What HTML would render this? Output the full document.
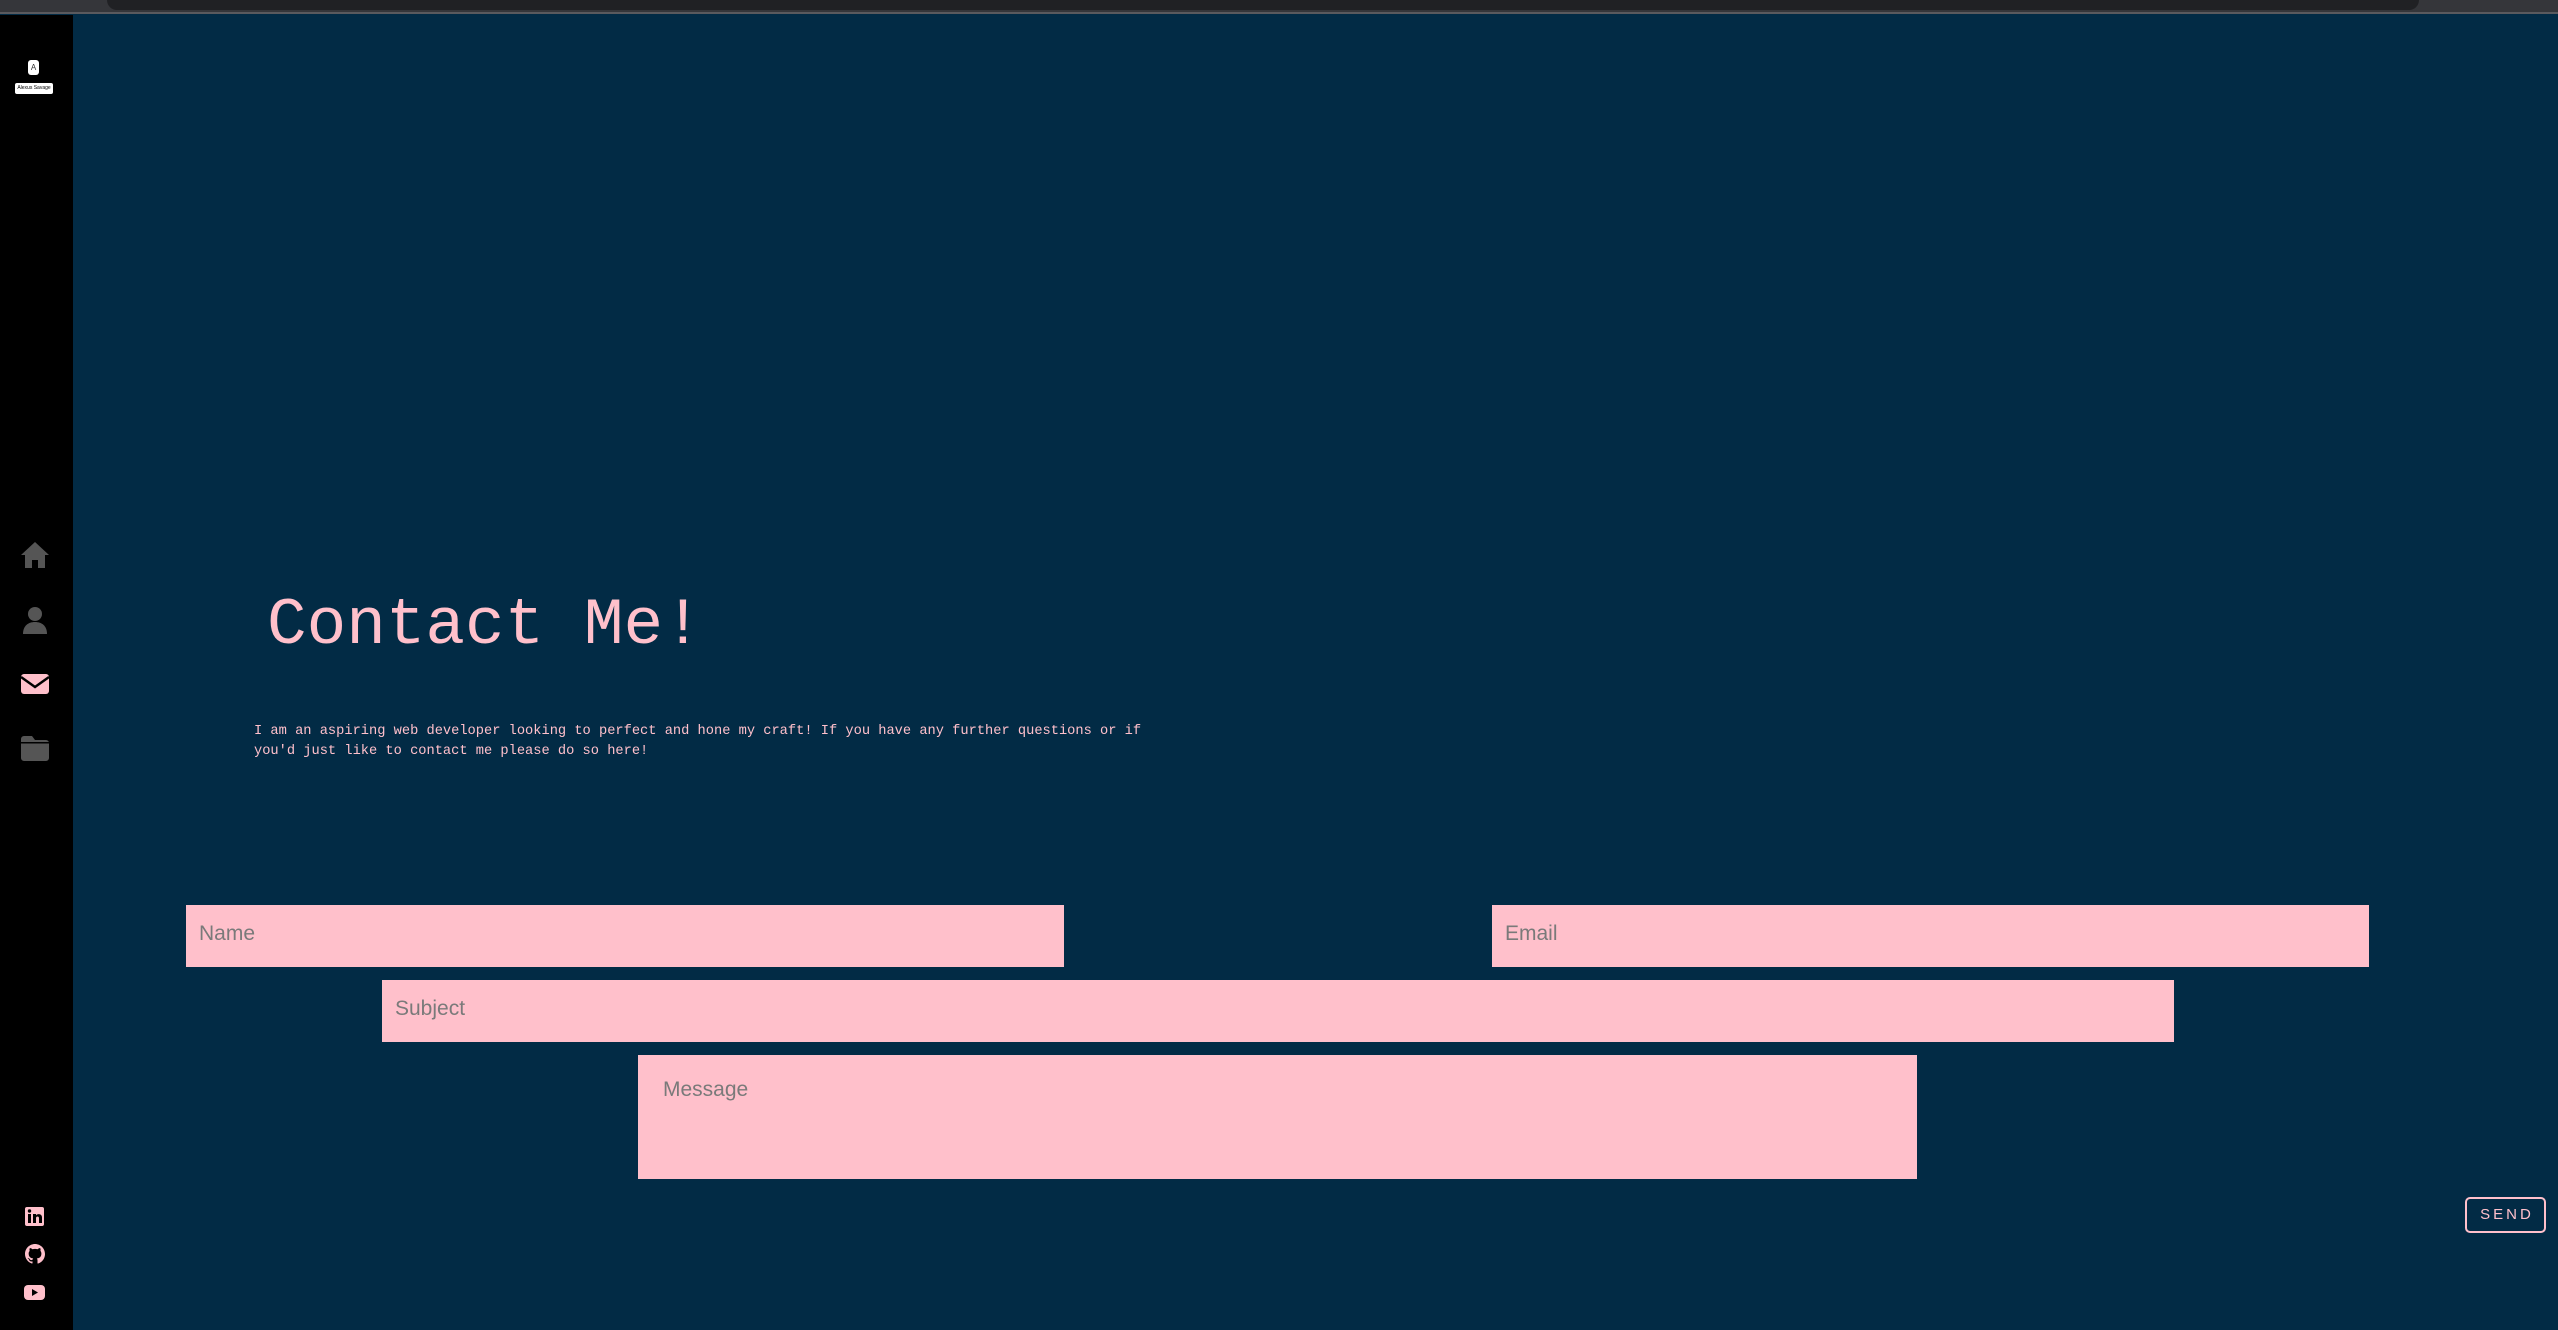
<!DOCTYPE html>
<html><head><meta charset="utf-8"><style>
*{margin:0;padding:0;box-sizing:border-box}
html,body{width:2558px;height:1330px;overflow:hidden;background:#022b45;font-family:"Liberation Sans",sans-serif}
.top{position:absolute;left:0;top:0;width:2558px;height:14px;background:#35363a;border-bottom:2px solid #5a5a5e}
.addr{position:absolute;left:107px;top:0;width:2312px;height:10px;background:#202124;border-radius:0 0 12px 12px}
.side{position:absolute;left:0;top:15px;width:73px;height:1315px;background:#000}
.logoA{position:absolute;left:28px;top:45px;width:11px;height:15px;background:#fff;border-radius:3px;font-size:8px;color:#333;text-align:center;line-height:15px}
.logoT{position:absolute;left:15px;top:68px;width:38px;height:11px;background:#fff;border-radius:2px;font-size:5px;color:#000;text-align:center;line-height:11px;white-space:nowrap}
.ic{position:absolute;left:20px}
h1{position:absolute;left:267px;top:586px;font-family:"Liberation Mono",monospace;font-weight:normal;font-size:66px;color:#ffc0cb;line-height:80px;white-space:nowrap}
p{position:absolute;left:254px;top:722px;width:920px;font-family:"Liberation Mono",monospace;font-size:13.7px;line-height:19.6px;color:#ffc0cb}
.in{position:absolute;background:#ffc0cb;color:#7a7a7a;font-size:21px}
.send{position:absolute;left:2465px;top:1197px;width:81px;height:36px;border:2px solid #ffc0cb;border-radius:5px;color:#ffc0cb;font-size:15px;letter-spacing:3px;text-align:center;line-height:32px;padding-left:3px}
</style></head><body>
<div class="top"><div class="addr"></div></div>
<div class="side">
<div class="logoA">A</div>
<div class="logoT">Alexus Savage</div>
</div>
<svg class="ic" style="top:541px" width="30" height="28" viewBox="0 0 30 28"><path d="M15 1L1 14h4v13h7v-8h6v8h7V14h4z" fill="#555"/></svg>
<svg class="ic" style="top:605px" width="30" height="30" viewBox="0 0 30 30"><circle cx="15" cy="9" r="7" fill="#555"/><path d="M3 29c0-8 5-12 12-12s12 4 12 12z" fill="#555"/></svg>
<svg class="ic" style="top:673px" width="30" height="22" viewBox="0 0 30 22"><rect x="1" y="1" width="28" height="20" rx="3" fill="#ffc0cb"/><path d="M1 4l14 10 14-10" stroke="#000" stroke-width="2.5" fill="none"/></svg>
<svg class="ic" style="top:735px" width="30" height="26" viewBox="0 0 30 26"><path d="M1 4a3 3 0 0 1 3-3h8l3 4h11a3 3 0 0 1 3 3v15a3 3 0 0 1-3 3H4a3 3 0 0 1-3-3z" fill="#555"/><rect x="1" y="7" width="28" height="1.5" fill="#000"/></svg>
<svg class="ic" style="left:25px;top:1207px" width="19" height="19" viewBox="0 0 19 19"><rect width="19" height="19" rx="2" fill="#ffc0cb"/><rect x="3" y="7" width="3" height="9" fill="#000"/><circle cx="4.5" cy="4" r="1.7" fill="#000"/><path d="M8 7h3v1.5c1-2 6-2 6 2V16h-3v-5c0-2-3-2-3 0v5H8z" fill="#000"/></svg>
<svg class="ic" style="left:25px;top:1244px" width="20" height="20" viewBox="0 0 16 16"><path fill="#ffc0cb" d="M8 0C3.58 0 0 3.58 0 8c0 3.540 2.290 6.530 5.470 7.590.4.07.55-.17.55-.38v-1.33c-2.23.48-2.7-1.070-2.7-1.070-.36-.92-.89-1.170-.89-1.170-.73-.5.06-.49.06-.49.8.06 1.230.83 1.230.83.72 1.220 1.870.87 2.330.66.07-.52.28-.87.51-1.070-1.780-.2-3.640-.89-3.640-3.950 0-.87.31-1.590.82-2.150-.08-.2-.36-1.020.08-2.120 0 0 .67-.21 2.200.82a7.600 7.600 0 0 1 4 0c1.530-1.040 2.200-.82 2.200-.82.44 1.100.16 1.920.08 2.120.51.56.82 1.270.82 2.150 0 3.070-1.870 3.750-3.650 3.950.29.25.54.73.54 1.480v2.200c0 .21.15.46.55.38A8.010 8.010 0 0 0 16 8c0-4.420-3.580-8-8-8z"/></svg>
<svg class="ic" style="left:24px;top:1285px" width="21" height="15" viewBox="0 0 21 15"><rect width="21" height="15" rx="4" fill="#ffc0cb"/><path d="M8 4l6 3.5-6 3.5z" fill="#000"/></svg>
<h1>Contact Me!</h1>
<p>I am an aspiring web developer looking to perfect and hone my craft! If you have any further questions or if you'd just like to contact me please do so here!</p>
<div class="in" style="left:186px;top:905px;width:878px;height:62px;padding:17px 13px">Name</div>
<div class="in" style="left:1492px;top:905px;width:877px;height:62px;padding:17px 13px">Email</div>
<div class="in" style="left:382px;top:980px;width:1792px;height:62px;padding:17px 13px">Subject</div>
<div class="in" style="left:638px;top:1055px;width:1279px;height:124px;padding:23px 25px">Message</div>
<div class="send">SEND</div>
</body></html>
